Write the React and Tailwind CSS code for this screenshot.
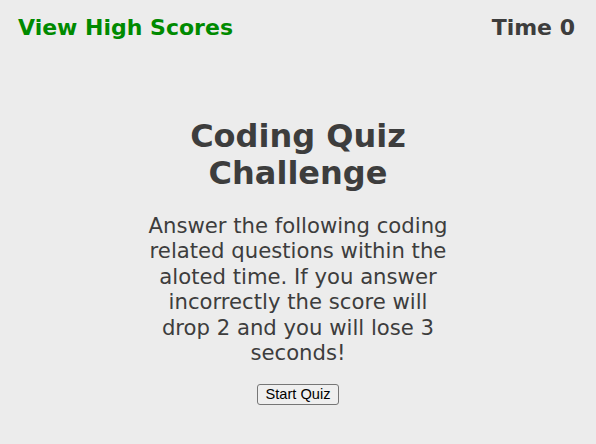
import React from "react";

export default function App() {
  return (
    <div className="min-h-[444px] bg-[#ececec] text-[#3d3d3d] font-['Verdana','DejaVu_Sans',sans-serif]">
      {/* header */}
      <header className="flex items-center justify-between pl-[18px] pr-[21px] pt-[13px]">
        <a className="text-[22px] font-bold leading-[30px] text-[#008a00]">View High Scores</a>
        <div className="text-[22px] font-bold leading-[30px]">Time 0</div>
      </header>

      {/* intro */}
      <main className="mx-auto mt-[75px] w-[306px] text-center">
        <h1 className="text-[32px] font-bold leading-[37px]">Coding Quiz Challenge</h1>
        <p className="mt-[21px] text-[21.2px] leading-[25.4px]">
          Answer the following coding related questions within the aloted time. If you answer incorrectly the score will drop 2 and you will lose 3 seconds!
        </p>
        <button className="mt-[19px] rounded-[3px] border border-[#767676] bg-[#efefef] px-[8px] py-[1px] font-['Liberation_Sans',Arial,sans-serif] text-[14.6px] leading-[17px] text-black">
          Start Quiz
        </button>
      </main>
    </div>
  );
}
